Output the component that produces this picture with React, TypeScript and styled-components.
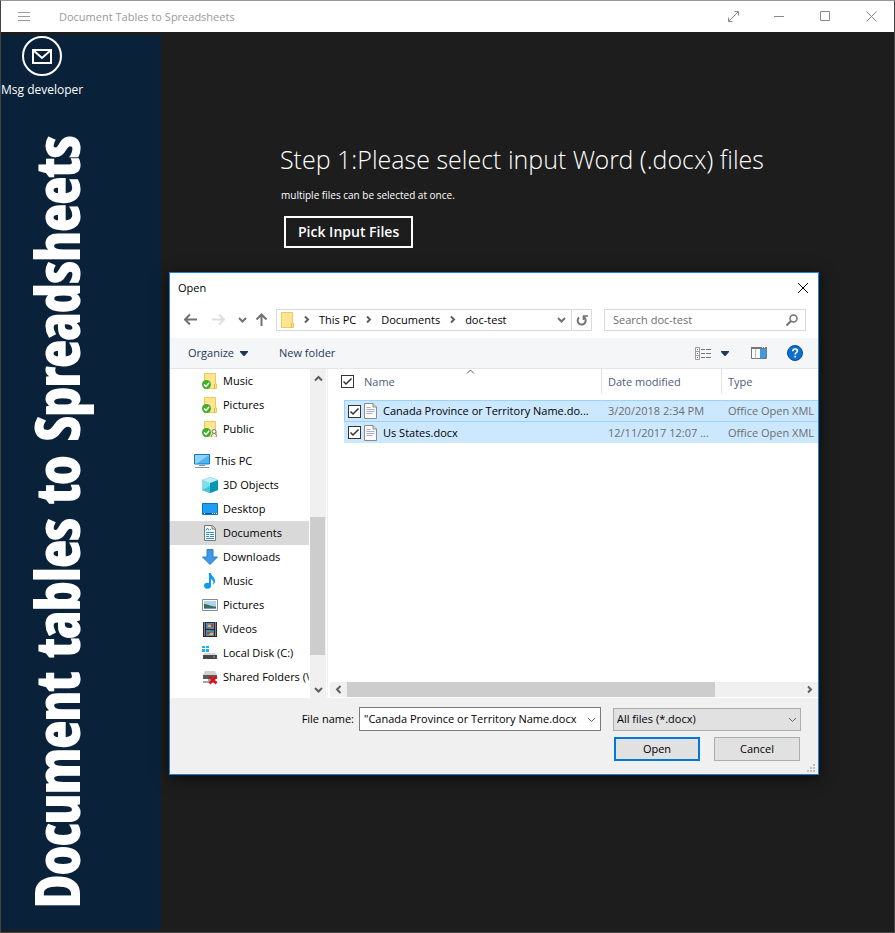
import React from 'react';
import styled, { createGlobalStyle } from 'styled-components';

const GlobalStyle = createGlobalStyle`
  * { box-sizing: border-box; }
  body {
    margin: 0;
    background: #1d1d1d;
    font: 11px/16px 'Open Sans', 'Noto Sans', sans-serif;
    color: #000;
  }
  button, input, select { font: inherit; color: inherit; }
  button { border: 0; padding: 0; background: none; }
  svg { display: block; flex: none; }
`;

const Window = styled.div`
  display: flex;
  flex-direction: column;
  min-height: 100vh;
  border: 1px solid #444;
  border-top-color: #999;
  background: #1d1d1d;
`;

const TitleBar = styled.header`
  display: flex;
  align-items: center;
  height: 31px;
  background: #fff;
  color: #999;
`;

const MenuButton = styled.button`
  display: grid;
  place-items: center;
  width: 46px;
  height: 31px;
`;

const AppTitle = styled.div`
  flex: 1;
  padding-left: 12px;
`;

const CaptionButton = styled(MenuButton)``;

const Body = styled.div`
  display: flex;
  flex: 1;
`;

const Sidebar = styled.aside`
  display: flex;
  flex-direction: column;
  align-items: flex-start;
  width: 160px;
  margin: 3px 0 2px;
  background: #0a2239;
  color: #fff;
`;

const Message = styled.button`
  display: flex;
  flex-direction: column;
  align-items: center;
  gap: 6px;
  padding-top: 1px;
  color: #fff;
  font-size: 12px;
`;

const Brand = styled.h1`
  margin: 38px 0 0 15px;
  writing-mode: vertical-rl;
  transform: rotate(180deg);
  font: 700 59px/80px 'Open Sans Condensed', 'Roboto Condensed', sans-serif;
  -webkit-text-stroke: 2px #fff;
  white-space: nowrap;
`;

const Main = styled.main`
  flex: 1;
  min-width: 0;
  padding: 109px 8px 0;
`;

const Step = styled.section`
  display: flex;
  flex-direction: column;
  align-items: flex-start;
  padding-left: 111px;
  color: #fff;
`;

const StepTitle = styled.h2`
  margin: 0;
  font: 400 25px/36px 'Open Sans Light', 'Open Sans', sans-serif;
`;

const StepNote = styled.p`
  margin: 10px 0 13px 1px;
  font-size: 10px;
`;

const PickButton = styled.button`
  height: 32px;
  margin-left: 4px;
  padding: 0 12px;
  border: 2px solid #fff;
  color: #fff;
  font-size: 14px;
  font-weight: 600;
`;

const Dialog = styled.section`
  display: flex;
  flex-direction: column;
  max-width: 650px;
  margin-top: 24px;
  border: 1px solid #1883d7;
  background: #fff;
  box-shadow: 0 3px 14px rgba(0, 0, 0, 0.6);
`;

const DialogHeader = styled.div`
  display: flex;
  align-items: center;
  justify-content: space-between;
  height: 30px;
  padding: 0 9px 0 8px;
`;

const NavRow = styled.div`
  display: flex;
  align-items: center;
  height: 35px;
  padding: 0 12px 2px;
`;

const NavButton = styled.button<{ $width: number }>`
  display: grid;
  place-items: center;
  width: ${(p) => p.$width}px;
  height: 22px;
`;

const Address = styled.div`
  display: flex;
  flex: 1;
  align-items: center;
  height: 22px;
  margin-right: 12px;
  border: 1px solid #d9d9d9;
`;

const Crumbs = styled.nav`
  display: flex;
  flex: 1;
  align-items: center;
  gap: 8px;
  padding-left: 4px;
`;

const Crumb = styled.a`
  color: #000;
  text-decoration: none;
`;

const RefreshButton = styled(NavButton)`
  height: 20px;
  border-left: 1px solid #d9d9d9;
`;

const Search = styled.label`
  display: flex;
  align-items: center;
  width: 202px;
  height: 22px;
  padding: 0 7px 0 8px;
  border: 1px solid #d9d9d9;
`;

const SearchInput = styled.input`
  flex: 1;
  min-width: 0;
  padding: 0;
  border: 0;
  outline: 0;
  background: none;
  &::placeholder { color: #6d6d6d; opacity: 1; }
`;

const Toolbar = styled.div`
  display: flex;
  align-items: center;
  height: 31px;
  padding: 0 15px 0 18px;
  border-bottom: 1px solid #e3e5e8;
  background: #f4f6f8;
  color: #1e395b;
`;

const ToolButton = styled.button<{ $gap?: number }>`
  display: flex;
  align-items: center;
  gap: 6px;
  margin-right: ${(p) => p.$gap || 0}px;
`;

const Spacer = styled.div`
  flex: 1;
`;

const Panes = styled.div`
  display: grid;
  grid-template-columns: 139px 17px 1fr;
  height: 329px;
`;

const Tree = styled.ul`
  margin: 0;
  padding: 0;
  list-style: none;
  overflow: hidden;
`;

const TreeItem = styled.li<{ $root?: boolean; $selected?: boolean }>`
  display: flex;
  align-items: center;
  gap: 5px;
  height: 24px;
  margin-top: ${(p) => (p.$root ? 8 : 0)}px;
  padding-left: ${(p) => (p.$root ? 24 : 32)}px;
  background: ${(p) => (p.$selected ? '#d9d9d9' : 'transparent')};
  white-space: nowrap;
`;

const VerticalScroll = styled.div`
  display: grid;
  grid-template-rows: 18px 1fr 17px;
  width: 16px;
  margin-left: 1px;
  background: #f0f0f0;
`;

const HorizontalScroll = styled.div`
  display: grid;
  grid-template-columns: 17px 1fr 17px;
  height: 15px;
  margin-bottom: 1px;
  background: #f0f0f0;
`;

const ScrollButton = styled.button`
  display: grid;
  place-items: center;
`;

const VerticalThumb = styled.div`
  height: 138px;
  margin-top: 130px;
  width: 15px;
  background: #cdcdcd;
`;

const HorizontalThumb = styled.div`
  width: 81%;
  background: #cdcdcd;
`;

const ListPane = styled.div`
  display: flex;
  flex-direction: column;
  min-width: 0;
  margin-left: 1px;
  border-left: 1px solid #f0f0f0;
  padding-left: 2px;
`;

const TableArea = styled.div`
  flex: 1;
  overflow: hidden;
`;

const FileTable = styled.table`
  width: 100%;
  table-layout: fixed;
  border-collapse: collapse;
`;

const HeadCell = styled.th<{ $width?: number }>`
  width: ${(p) => (p.$width ? p.$width + 'px' : 'auto')};
  padding: 0 0 6px;
  color: #4c607a;
  font-weight: 400;
  text-align: left;
`;

const HeadContent = styled.div<{ $divided?: boolean }>`
  display: flex;
  align-items: center;
  gap: 10px;
  height: 25px;
  padding-left: ${(p) => (p.$divided ? 6 : 11)}px;
  border-left: ${(p) => (p.$divided ? '1px solid #e5e5e5' : '0')};
`;

const SortMark = styled.div`
  align-self: flex-start;
  margin: -2px 0 0 61px;
`;

const BodyCell = styled.td`
  padding: 0;
  color: #6d6d6d;
`;

const CellContent = styled.div<{ $focused?: boolean; $first?: boolean }>`
  display: flex;
  align-items: center;
  height: ${(p) => (p.$focused ? 22 : 21)}px;
  margin-left: ${(p) => (p.$first ? 14 : 0)}px;
  padding-left: ${(p) => (p.$first ? 3 : 6)}px;
  background: #cce8ff;
  border: 0 solid #99d1ff;
  border-width: ${(p) => (p.$focused ? '1px 0' : '0')};
  border-left: 1px solid ${(p) => (p.$first && p.$focused ? '#99d1ff' : '#cce8ff')};
  color: ${(p) => (p.$first ? '#000' : '#6d6d6d')};
  white-space: nowrap;
  overflow: hidden;
`;

const FileIconSlot = styled.span`
  margin: 0 6px 0 3px;
`;

const CheckLabel = styled.label`
  display: grid;
  width: 13px;
  height: 13px;
`;

const CheckInput = styled.input`
  grid-area: 1 / 1;
  width: 13px;
  height: 13px;
  margin: 0;
  appearance: none;
  border: 1px solid #333;
  background: #fff;
`;

const CheckMark = styled.svg`
  grid-area: 1 / 1;
  z-index: 1;
  visibility: hidden;
  pointer-events: none;
  ${CheckInput}:checked + & { visibility: visible; }
`;

const Footer = styled.footer`
  display: grid;
  grid-template-columns: 1fr 188px;
  gap: 6px 12px;
  padding: 9px 17px 13px 20px;
  background: #f0f0f0;
`;

const FileNameRow = styled.div`
  display: flex;
  align-items: center;
  justify-content: flex-end;
  gap: 5px;
`;

const ComboBox = styled.div`
  display: flex;
  align-items: center;
  width: 242px;
  height: 24px;
  padding: 0 4px;
  border: 1px solid #7a7a7a;
  background: #fff;
`;

const FileNameInput = styled.input`
  flex: 1;
  min-width: 0;
  padding: 0;
  border: 0;
  outline: 0;
`;

const SelectBox = styled.div`
  display: grid;
  align-items: center;
`;

const TypeSelect = styled.select`
  grid-area: 1 / 1;
  width: 100%;
  height: 23px;
  padding: 0 3px;
  appearance: none;
  border: 1px solid #adadad;
  border-radius: 0;
  background: #e1e1e1;
`;

const SelectArrow = styled.span`
  grid-area: 1 / 1;
  justify-self: end;
  margin-right: 4px;
  pointer-events: none;
`;

const Actions = styled.div`
  display: grid;
  grid-column: 2;
  grid-template-columns: 1fr 1fr;
  gap: 14px;
  padding: 0 1px;
`;

const ActionButton = styled.button<{ $primary?: boolean }>`
  height: 24px;
  border: ${(p) => (p.$primary ? '2px solid #0078d7' : '1px solid #adadad')};
  background: #e1e1e1;
`;

const FooterWrap = styled.div`
  position: relative;
`;

const Grip = styled.svg`
  position: absolute;
  right: 3px;
  bottom: 2px;
`;

type ChevronDirection = 'up' | 'down' | 'left' | 'right';
const chevrons: Record<ChevronDirection, string> = {
  up: 'M1 6.5 4.5 3 8 6.5',
  down: 'M1 3 4.5 6.5 8 3',
  left: 'M6.5 1 3 4.5 6.5 8',
  right: 'M3 1.5 6 4.5 3 7.5',
};

const Chevron = ({ to, color = '#606060', weight = 2 }: { to: ChevronDirection; color?: string; weight?: number }) => (
  <svg width="9" height="9" viewBox="0 0 9 9" fill="none" stroke={color} strokeWidth={weight}>
    <path d={chevrons[to]} />
  </svg>
);

const Caret = () => (
  <svg width="8" height="5" viewBox="0 0 8 5" fill="#1e395b">
    <path d="M0 0h8v1L4.500 5h-1L0 1z" />
  </svg>
);

const Arrow = ({ d, color = '#727272' }: { d: string; color?: string }) => (
  <svg width="13" height="13" viewBox="0 0 13 13" fill="none" stroke={color} strokeWidth="2">
    <path d={d} />
  </svg>
);

const Caption = ({ d }: { d: string }) => (
  <svg width="11" height="11" viewBox="0 0 11 11" fill="none" stroke="#888">
    <path d={d} />
  </svg>
);

const Check = ({ label }: { label: string }) => (
  <CheckLabel>
    <CheckInput type="checkbox" defaultChecked aria-label={label} />
    <CheckMark width="13" height="13" viewBox="0 0 13 13" fill="none" stroke="#333" strokeWidth="1.5">
      <path d="M2.500 6.500 5 9 10.500 3.500" />
    </CheckMark>
  </CheckLabel>
);

const DocIcon = () => (
  <svg width="13" height="16" viewBox="0 0 13 16" fill="#fafafa" stroke="#8b8b8b">
    <path d="M.5.5h8.500l3.500 3.500v11.500H.5z" />
    <path d="M9 .5V4h3.500" fill="#ddd" />
    <path d="M2.500 4.500h4M2.500 6.500h8M2.500 8.500h8M2.500 10.500h6" stroke="#a9b0c4" />
  </svg>
);

const FolderShape = () => (
  <>
    <path d="M2.500.5h11v10.500h1v4.500h-12z" fill="#ffe591" stroke="#efca52" />
    <path d="M12.500 11v4.500" stroke="#e3b93c" />
  </>
);

const Synced = ({ shared = false }: { shared?: boolean }) => (
  <svg width="16" height="16" viewBox="0 0 16 16" fill="none">
    <FolderShape />
    <circle cx="4.500" cy="11.500" r="4.500" fill="#3fae29" />
    <path d="M2 11.500 4 13.500 7.200 9.800" stroke="#fff" strokeWidth="1.500" />
    {shared && (
      <g stroke="#777" fill="#f5f5f5">
        <circle cx="12" cy="10.500" r="2" />
        <path d="M9.500 15.500c0-4 5-4 5 0" />
      </g>
    )}
  </svg>
);

const FolderIcon = () => (
  <svg width="13" height="16" viewBox="2 0 13 16" fill="none">
    <FolderShape />
  </svg>
);

const icons: Record<string, React.ReactNode> = {
  pc: (
    <>
      <path d="M.5 1.500h15v9.500H.5z" fill="#4db5f5" stroke="#1976b5" />
      <path d="M1 2h14L3 10.500H1z" fill="#8dd3fb" />
      <path d="M5 12.500h6M1 14.500h14" stroke="#8195a5" />
    </>
  ),
  cube: (
    <>
      <path d="m8 0 8 3v10l-8 3-8-3V3z" fill="#29b6cf" />
      <path d="m0 3 8 3v10l-8-3z" fill="#7fdfe9" />
      <path d="m16 3-8 3v10l8-3z" fill="#0797b5" />
      <path d="m0 3 8-3 8 3-8 3z" fill="#c0edf2" />
      <path d="M0 13 8 9v7z" fill="#45c5d8" />
    </>
  ),
  desktop: (
    <>
      <path d="M.5 2.500h15v11H.5z" fill="#1e9df2" stroke="#0873c4" />
      <path d="M1 12.500h14" stroke="#075b9c" />
      <path d="M2 12.500h1M10 12.500h1M12 12.500h1M14 12.500h1" stroke="#fff" />
    </>
  ),
  documents: (
    <>
      <path d="M2.500.5h8l3 3v12h-11z" fill="#fff" stroke="#777" />
      <path d="M10 .5V4h3.500" fill="#ddd" stroke="#777" />
      <path d="M4 5.500 5.500 3 7 5.500M8 4.500h1M4 7.500h8M4 9.500h3M8 9.500h4M4 11.500h3M8 11.500h4M4 13.500h8" stroke="#2c8fd0" />
    </>
  ),
  downloads: <path d="M5 .5h6V8h4.500L8 15.500.5 8H5z" fill="#3d98e6" stroke="#2b7fc9" />,
  music: (
    <>
      <path d="M7 0h2c0 3 4 4 4 8 0 2-1 3-2 4 1-3 0-5-2-6v6H7z" fill="#0a9cf0" />
      <ellipse cx="5.500" cy="12.800" rx="3.500" ry="3" fill="#0a9cf0" />
    </>
  ),
  pictures: (
    <>
      <path d="M.5 2.500h15v11H.5z" fill="#fff" stroke="#8a8a8a" />
      <path d="M2 4h12v8H2z" fill="#a9d5f3" />
      <path d="M2 7c4 0 6 2.500 12 2.500V12H2z" fill="#3c6a5c" />
      <path d="M2 11h12v1H2z" fill="#6ba3cf" />
    </>
  ),
  videos: (
    <>
      <path d="M1 1h14v15H1z" fill="#2a2a2a" />
      <path d="M2.500 1.500v14M13.500 1.500v14" stroke="#ddd" strokeDasharray="1 1" />
      <path d="M4 2h8v6H4zM4 9h8v6H4z" fill="#5a84c8" />
      <path d="M6 4h3v2H6zM7 12h4v2H7z" fill="#e8b931" />
      <path d="M9 3h2v3H9zM5 11h3v2H5z" fill="#ad4a2a" />
      <path d="M4 7h4v1H4zM8 9h4v1H8z" fill="#3e8b45" />
    </>
  ),
  disk: (
    <>
      <path d="M0 1h3v2H0zM4 1h3v2H4zM0 4h3v3H0zM4 4h3v3H4z" fill="#17b1ed" />
      <path d="m3 8h10l2 2H1z" fill="#d6d6d6" />
      <path d="M1 10h14v4H1z" fill="#4a4a4a" />
      <path d="M11 12h2" stroke="#55d94e" />
    </>
  ),
  shared: (
    <>
      <path d="M3 2h10l2 4H1z" fill="#d0d0d0" />
      <path d="M1 6h14v4H1z" fill="#5c5c5c" />
      <path d="M6 10h4v3H6zM1 12h14v2H1z" fill="#a5a5a5" />
      <path d="m7.500 7.500 7 7m0-7-7 7" stroke="#d9131c" strokeWidth="2.600" />
    </>
  ),
};

const TreeIcon = ({ name }: { name: string }) => {
  if (name === 'synced') return <Synced />;
  if (name === 'public') return <Synced shared />;
  return (
    <svg width="16" height="16" viewBox="0 0 16 16" fill="none">
      {icons[name]}
    </svg>
  );
};

const tree = [
  { icon: 'synced', label: 'Music' },
  { icon: 'synced', label: 'Pictures' },
  { icon: 'public', label: 'Public' },
  { icon: 'pc', label: 'This PC', root: true },
  { icon: 'cube', label: '3D Objects' },
  { icon: 'desktop', label: 'Desktop' },
  { icon: 'documents', label: 'Documents', selected: true },
  { icon: 'downloads', label: 'Downloads' },
  { icon: 'music', label: 'Music' },
  { icon: 'pictures', label: 'Pictures' },
  { icon: 'videos', label: 'Videos' },
  { icon: 'disk', label: 'Local Disk (C:)' },
  { icon: 'shared', label: 'Shared Folders (\\' },
];

const files = [
  { name: 'Canada Province or Territory Name.do...', date: '3/20/2018 2:34 PM', type: 'Office Open XML' },
  { name: 'Us States.docx', date: '12/11/2017 12:07 ...', type: 'Office Open XML' },
];

const FileRow = ({ file, focused }: { file: (typeof files)[number]; focused: boolean }) => (
  <tr>
    <BodyCell>
      <CellContent $first $focused={focused}>
        <Check label={file.name} />
        <FileIconSlot><DocIcon /></FileIconSlot>
        {file.name}
      </CellContent>
    </BodyCell>
    <BodyCell><CellContent $focused={focused}>{file.date}</CellContent></BodyCell>
    <BodyCell><CellContent $focused={focused}>{file.type}</CellContent></BodyCell>
  </tr>
);

const OpenDialog = () => (
  <Dialog role="dialog" aria-label="Open">
    <DialogHeader>
      <span>Open</span>
      <button aria-label="Close dialog">
        <svg width="12" height="12" viewBox="0 0 12 12" stroke="#000">
          <path d="m1 1 10 10M11 1 1 11" />
        </svg>
      </button>
    </DialogHeader>

    <NavRow>
      <NavButton $width={16} aria-label="Back"><Arrow d="M13 6.500H1.500M6 1.500l-5 5 5 5" /></NavButton>
      <NavButton $width={40} aria-label="Forward"><Arrow color="#dedede" d="M0 6.500h11.500M7 1.500l5 5-5 5" /></NavButton>
      <NavButton $width={8} aria-label="Recent locations"><Chevron to="down" color="#727272" /></NavButton>
      <NavButton $width={30} aria-label="Up"><Arrow d="M6.500 13V1.500M1.500 6.500l5-5 5 5" /></NavButton>
      <Address>
        <Crumbs aria-label="Location">
          <FolderIcon />
          <Chevron to="right" />
          <Crumb href="#pc">This PC</Crumb>
          <Chevron to="right" />
          <Crumb href="#documents">Documents</Crumb>
          <Chevron to="right" />
          <Crumb href="#doc-test">doc-test</Crumb>
        </Crumbs>
        <NavButton $width={19} aria-label="Previous locations"><Chevron to="down" color="#727272" /></NavButton>
        <RefreshButton $width={20} aria-label="Refresh">
          <svg width="12" height="12" viewBox="0 0 12 12" fill="none" stroke="#727272" strokeWidth="2">
            <path d="M7 2.800A4 4 0 1 1 3 3.600" />
            <path d="M7.500 6V2H12" strokeWidth="1.500" />
          </svg>
        </RefreshButton>
      </Address>
      <Search>
        <SearchInput type="text" placeholder="Search doc-test" aria-label="Search doc-test" />
        <svg width="12" height="12" viewBox="0 0 12 12" fill="none" stroke="#727272" strokeWidth="1.500">
          <circle cx="7.500" cy="4.500" r="3.500" />
          <path d="M5 7 .5 11.500" strokeWidth="2" />
        </svg>
      </Search>
    </NavRow>

    <Toolbar>
      <ToolButton $gap={31}>Organize <Caret /></ToolButton>
      <ToolButton>New folder</ToolButton>
      <Spacer />
      <ToolButton $gap={22} aria-label="Change view">
        <svg width="20" height="13" viewBox="0 0 20 13" fill="none">
          <path d="M.5.5h4v12h-4z" fill="#fff" stroke="#999" />
          <path d="M.5 4.500h4M.5 8.500h4" stroke="#999" />
          <path d="M2 2.500h1M2 6.500h1" stroke="#527ab0" />
          <path d="M2 10.500h1" stroke="#d02020" />
          <path d="M6 2.500h4M11 2.500h5M6 6.500h4M11 6.500h5M6 10.500h4M11 10.500h5" stroke="#777" />
        </svg>
        <Caret />
      </ToolButton>
      <ToolButton $gap={20} aria-label="Preview pane">
        <svg width="16" height="12" viewBox="0 0 16 12" fill="none">
          <path d="M.5.5h15v11H.5z" fill="#fff" stroke="#777" />
          <path d="M0 1h16" stroke="#777" strokeWidth="2" />
          <path d="M4.500 2v9.500" stroke="#bbb" />
          <path d="M9 2h6v9H9z" fill="#3d9be6" />
          <path d="M11 .5h1M13 .5h1" stroke="#fff" />
        </svg>
      </ToolButton>
      <ToolButton aria-label="Help">
        <svg width="16" height="16" viewBox="0 0 16 16" fill="none">
          <circle cx="8" cy="8" r="7.500" fill="#0a6fd0" stroke="#0a4d94" />
          <path d="M5.800 6.200c0-3 4.600-2.800 4.600-.2 0 1.700-2.200 1.700-2.200 3.400M8.200 10.800v1.700" stroke="#fff" strokeWidth="1.700" />
        </svg>
      </ToolButton>
    </Toolbar>

    <Panes>
      <Tree>
        {tree.map((item, i) => (
          <TreeItem key={i} $root={item.root} $selected={item.selected}>
            <TreeIcon name={item.icon} />
            {item.label}
          </TreeItem>
        ))}
      </Tree>
      <VerticalScroll>
        <ScrollButton aria-label="Scroll up"><Chevron to="up" /></ScrollButton>
        <VerticalThumb />
        <ScrollButton aria-label="Scroll down"><Chevron to="down" /></ScrollButton>
      </VerticalScroll>
      <ListPane>
        <TableArea>
          <FileTable>
            <thead>
              <tr>
                <HeadCell $width={271}>
                  <HeadContent>
                    <Check label="Select all" />
                    Name
                    <SortMark><Chevron to="up" weight={1} /></SortMark>
                  </HeadContent>
                </HeadCell>
                <HeadCell $width={120}><HeadContent $divided>Date modified</HeadContent></HeadCell>
                <HeadCell><HeadContent $divided>Type</HeadContent></HeadCell>
              </tr>
            </thead>
            <tbody>
              {files.map((file, i) => (
                <FileRow key={file.name} file={file} focused={i === 0} />
              ))}
            </tbody>
          </FileTable>
        </TableArea>
        <HorizontalScroll>
          <ScrollButton aria-label="Scroll left"><Chevron to="left" /></ScrollButton>
          <HorizontalThumb />
          <ScrollButton aria-label="Scroll right"><Chevron to="right" /></ScrollButton>
        </HorizontalScroll>
      </ListPane>
    </Panes>

    <FooterWrap>
      <Footer>
        <FileNameRow>
          <label htmlFor="file-name">File name:</label>
          <ComboBox>
            <FileNameInput id="file-name" type="text" defaultValue={'"Canada Province or Territory Name.docx'} />
            <button aria-label="File name history"><Chevron to="down" weight={1} /></button>
          </ComboBox>
        </FileNameRow>
        <SelectBox>
          <TypeSelect aria-label="File type">
            <option>All files (*.docx)</option>
          </TypeSelect>
          <SelectArrow><Chevron to="down" weight={1} /></SelectArrow>
        </SelectBox>
        <Actions>
          <ActionButton $primary>Open</ActionButton>
          <ActionButton>Cancel</ActionButton>
        </Actions>
      </Footer>
      <Grip width="8" height="8" viewBox="0 0 8 8" fill="#bfbfbf">
        <path d="M6 0h2v2H6zM3 3h2v2H3zM6 3h2v2H6zM0 6h2v2H0zM3 6h2v2H3zM6 6h2v2H6z" />
      </Grip>
    </FooterWrap>
  </Dialog>
);

export default function App() {
  return (
    <>
      <GlobalStyle />
      <Window>
        <TitleBar>
          <MenuButton aria-label="Menu">
            <svg width="12" height="9" viewBox="0 0 12 9" stroke="#999">
              <path d="M0 .5h12M0 4.500h12M0 8.500h12" />
            </svg>
          </MenuButton>
          <AppTitle>Document Tables to Spreadsheets</AppTitle>
          <CaptionButton aria-label="Full screen"><Caption d="M1 10 10 1M6.500.5h4v4M.5 6.500v4h4" /></CaptionButton>
          <CaptionButton aria-label="Minimize"><Caption d="M0 5.500h10" /></CaptionButton>
          <CaptionButton aria-label="Maximize"><Caption d="M.5.5h9v9h-9z" /></CaptionButton>
          <CaptionButton aria-label="Close"><Caption d="m.5.5 10 10m0-10-10 10" /></CaptionButton>
        </TitleBar>
        <Body>
          <Sidebar>
            <Message>
              <svg width="40" height="40" viewBox="0 0 40 40" fill="none" stroke="#fff" strokeWidth="2">
                <circle cx="20" cy="20" r="19" />
                <path d="M11 14h18v13H11z" />
                <path d="m11 14 9 8 9-8" />
              </svg>
              Msg developer
            </Message>
            <Brand>Document tables to Spreadsheets</Brand>
          </Sidebar>
          <Main>
            <Step>
              <StepTitle>Step 1:Please select input Word (.docx) files</StepTitle>
              <StepNote>multiple files can be selected at once.</StepNote>
              <PickButton>Pick Input Files</PickButton>
            </Step>
            <OpenDialog />
          </Main>
        </Body>
      </Window>
    </>
  );
}
